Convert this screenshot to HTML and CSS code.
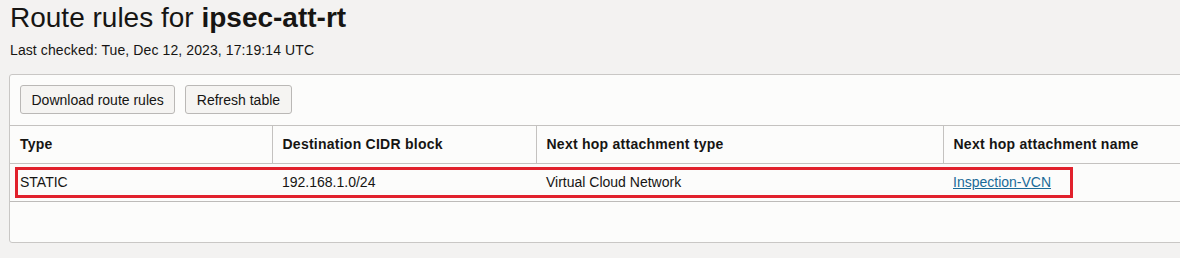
FILE: index.html
```html
<!DOCTYPE html>
<html lang="en">
    <head>
        <meta charset="UTF-8">
        <meta name="viewport" content="width=device-width, initial-scale=1.0">
        <title>Route rules - ipsec-att-rt</title>
        <link rel="stylesheet" href="styles.css">
    </head>
<body>
    <div class="page">
        <div class="header">
            <h1>Route rules for <strong>ipsec-att-rt</strong></h1>
            <p class="subtitle">Last checked: Tue, Dec 12, 2023, 17:19:14 UTC</p>
        </div>

        <div class="panel">
            <div class="toolbar">
                <button type="button" class="btn">Download route rules</button>
                <button type="button" class="btn">Refresh table</button>
            </div>

            <div class="table-wrap">
                <table class="rules">
                    <colgroup>
                        <col class="col-type">
                        <col class="col-cidr">
                        <col class="col-hop-type">
                        <col class="col-hop-name">
                    </colgroup>
                    <thead>
                        <tr>
                            <th>Type</th>
                            <th>Destination CIDR block</th>
                            <th>Next hop attachment type</th>
                            <th>Next hop attachment name</th>
                        </tr>
                    </thead>
                    <tbody>
                        <tr>
                            <td>STATIC</td>
                            <td>192.168.1.0/24</td>
                            <td>Virtual Cloud Network</td>
                            <td><a href="#">Inspection-VCN</a></td>
                        </tr>
                    </tbody>
                </table>
                <!-- annotation box drawn over the first row -->
                <div class="highlight"></div>
            </div>

            <div class="table-footer"></div>
        </div>
    </div>
</body>
</html>
```

FILE: styles.css
```css
* {
    margin: 0;
    padding: 0;
    box-sizing: border-box;
    font-family: 'Liberation Sans', Arial, sans-serif;
}

body {
    background-color: #f3f2f1;
    color: #161513;
    overflow: hidden;
}

.page {
    padding: 1px 0 0 9px;
}

.header {
    padding-left: 1px;
}

h1 {
    font-size: 28px;
    font-weight: 400;
    line-height: 33px;
}

h1 strong {
    font-weight: 700;
}

.subtitle {
    font-size: 14px;
    line-height: 16px;
    margin-top: 8px;
    letter-spacing: 0.1px;
}

.panel {
    margin-top: 16px;
    width: 1200px;
    background-color: #fcfcfb;
    border: 1px solid #c9c7c5;
    border-radius: 3px 0 0 3px;
}

.toolbar {
    display: flex;
    gap: 10px;
    padding: 10px 10px 11px 10px;
    border-bottom: 1px solid #c4c2c0;
}

.btn {
    height: 29px;
    padding: 0 10.5px;
    background-color: #f5f4f2;
    border: 1px solid #bab8b6;
    border-radius: 3px;
    color: #161513;
    font-size: 14px;
    cursor: pointer;
}

.table-wrap {
    position: relative;
}

.rules {
    width: 100%;
    border-collapse: collapse;
    table-layout: fixed;
    font-size: 14px;
}

.col-type { width: 262px; }
.col-cidr { width: 264px; }
.col-hop-type { width: 407px; }

.rules th,
.rules td {
    height: 38px;
    padding: 0 10px;
    text-align: left;
    vertical-align: middle;
    white-space: nowrap;
}

.rules th {
    height: 37px;
    font-weight: 700;
    letter-spacing: 0.25px;
    border-left: 1px solid #c4c2c0;
    border-bottom: 1px solid #c4c2c0;
}

.rules th:first-child {
    border-left: none;
}

.rules td {
    border-bottom: 1px solid #bdbbb9;
}

.rules a {
    color: #1a6a98;
}

.highlight {
    position: absolute;
    left: 5px;
    top: 41px;
    width: 1058px;
    height: 31px;
    border: 3px solid #e1212c;
    pointer-events: none;
}

.table-footer {
    height: 40px;
}
```
